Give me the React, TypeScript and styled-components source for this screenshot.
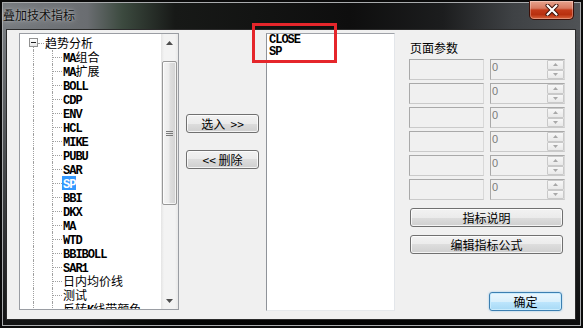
import React from 'react';
import styled, { createGlobalStyle, css } from 'styled-components';

const CJK = `"Noto Sans CJK SC", "Noto Sans", sans-serif`;
const MONO = `"Liberation Mono", "Noto Sans CJK SC", monospace`;

const GlobalStyle = createGlobalStyle`
    html, body {
        margin: 0;
        padding: 0;
        background: #000;
    }
    body {
        font-family: ${CJK};
        font-size: 12px;
    }
    * {
        box-sizing: border-box;
    }
`;

const Window = styled.div`
    position: relative;
    width: 583px;
    height: 328px;
    display: flex;
    flex-direction: column;
    overflow: hidden;
    background:
        linear-gradient(180deg, rgba(0, 0, 0, 0) 0, rgba(0, 0, 0, 0) 30px, rgba(0, 0, 0, 0.45) 55%, rgba(0, 0, 0, 0.85) 100%),
        linear-gradient(90deg, #787c80 0%, #6a6d71 15%, #3c4a3f 21%, #171917 30%, #0e0e0e 60%, #1c1d1e 76%, #3f4245 88%, #505356 100%);
    box-shadow: inset 0 0 0 2px #0b0b0b, inset 0 0 0 3px #a9abad;
`;

const TitleBar = styled.div`
    height: 30px;
    flex: none;
    display: flex;
    align-items: flex-start;
    padding: 0 9px 0 3px;
`;

const Title = styled.div`
    margin-top: 7px;
    font: 12px/16px ${CJK};
    color: #101010;
    text-shadow: 0 0 6px rgba(255, 255, 255, 0.55), 0 0 2px rgba(255, 255, 255, 0.45);
`;

const CloseButton = styled.div`
    margin-left: auto;
    margin-top: 1px;
    width: 45px;
    height: 19px;
    border: 1px solid #3b0f07;
    border-top: none;
    border-radius: 0 0 5px 5px;
    background: linear-gradient(#e8a48e, #d77a61 40%, #c33b1a 50%, #b8300f 75%, #d8643d 100%);
    box-shadow: inset 0 0 0 1px rgba(255, 255, 255, 0.3);
    display: flex;
    align-items: center;
    justify-content: center;
`;

const Client = styled.div`
    flex: 1;
    margin: 0 8px 9px 7px;
    background: #f0f0f0;
    box-shadow: 0 0 0 1px #2b2b2b;
    display: flex;
    align-items: flex-start;
    padding: 3px 10px 8px 12px;
`;

/* tree */

const Tree = styled.div`
    width: 160px;
    height: 277px;
    flex: none;
    background: #fff;
    border: 1px solid #9a9da3;
    display: flex;
    overflow: hidden;
`;

const TreeBody = styled.div`
    flex: 1;
    padding-top: 2px;
    overflow: hidden;
`;

const Row = styled.div`
    height: 14px;
    display: flex;
    align-items: stretch;
    white-space: nowrap;
`;

const Indent = styled.div<{ $w: number; $line?: boolean }>`
    width: ${(p) => p.$w}px;
    flex: none;
    display: flex;
    align-items: center;
    ${(p) =>
        p.$line &&
        css`
            border-left: 1px dotted #a0a0a0;
        `}
`;

const Dash = styled.div`
    flex: 1;
    border-top: 1px dotted #a0a0a0;
`;

const ExpanderCell = styled.div`
    width: 9px;
    flex: none;
    display: flex;
    flex-direction: column;
    align-items: center;
    padding-top: 2px;
`;

const ExpanderBox = styled.div`
    width: 9px;
    height: 9px;
    flex: none;
    border: 1px solid #919191;
    background: linear-gradient(#ffffff, #e6e6e6);
    display: flex;
    align-items: center;
    justify-content: center;

    &::before {
        content: '';
        width: 5px;
        height: 1px;
        background: #202020;
    }
`;

const Tail = styled.div`
    flex: 1;
    width: 1px;
    border-left: 1px dotted #a0a0a0;
`;

const Label = styled.span<{ $selected?: boolean }>`
    line-height: 14px;
    padding: 0 1px;
    color: ${(p) => (p.$selected ? '#fff' : '#000')};
    background: ${(p) => (p.$selected ? '#3399ff' : 'transparent')};
`;

const Latin = styled.span`
    font: bold 12px/14px ${MONO};
    letter-spacing: -1px;
`;

const Han = styled.span`
    font: 12px/14px ${CJK};
`;

const Scrollbar = styled.div`
    width: 17px;
    flex: none;
    display: flex;
    flex-direction: column;
    background: linear-gradient(90deg, #e4e4e4, #f3f3f3 18%, #f3f3f3 82%, #e8e8e8);
`;

const ScrollArrow = styled.div`
    height: 17px;
    flex: none;
    display: flex;
    align-items: center;
    justify-content: center;
`;

const Track = styled.div`
    flex: 1;
    display: flex;
    flex-direction: column;
    align-items: center;
`;

const Thumb = styled.div`
    margin-top: 10px;
    width: 15px;
    height: 144px;
    border: 1px solid #979797;
    border-radius: 2px;
    background: linear-gradient(90deg, #f4f4f4, #ececec 45%, #dedede 55%, #d3d3d3);
    box-shadow: inset 0 0 0 1px rgba(255, 255, 255, 0.7);
    display: flex;
    align-items: center;
    justify-content: center;
`;

/* middle */

const MoveColumn = styled.div`
    width: 73px;
    flex: none;
    margin: 0 7px;
    padding-top: 81px;
    display: flex;
    flex-direction: column;
    gap: 17px;
`;

const Button = styled.button<{ $primary?: boolean; $w?: number }>`
    height: 19px;
    width: ${(p) => (p.$w ? `${p.$w}px` : '100%')};
    flex: none;
    padding: 0;
    border: 1px solid #707070;
    border-radius: 3px;
    background: linear-gradient(#f2f2f2 0%, #ebebeb 50%, #dddddd 50%, #cfcfcf 100%);
    box-shadow: inset 0 0 0 1px rgba(255, 255, 255, 0.75);
    font: 12px/17px ${CJK};
    color: #000;
    white-space: pre;
    ${(p) =>
        p.$primary &&
        css`
            border-color: #3c7fb1;
            background: linear-gradient(#eaf6fd 0%, #d9f0fc 50%, #bee6fd 50%, #a7d9f5 100%);
            box-shadow: inset 0 0 0 1px #c8ebfd, 0 0 2px rgba(60, 160, 230, 0.6);
        `}
`;

const ListBox = styled.div`
    width: 129px;
    height: 278px;
    flex: none;
    background: #fff;
    border: 1px solid;
    border-color: #9fa2a8 #e3e6ea #e6e9ec #8f9399;
    padding: 0 2px;
    font: bold 12px/12px ${MONO};
    letter-spacing: -1px;
    color: #000;
`;

/* right panel */

const Panel = styled.div`
    width: 156px;
    height: 278px;
    flex: none;
    margin-left: 14px;
    display: flex;
    flex-direction: column;
`;

const PanelLabel = styled.div`
    margin: 8px 0 4px 1px;
    font: 12px/14px ${CJK};
    color: #000;
`;

const ParamRow = styled.div`
    height: 21px;
    display: flex;
    gap: 6px;

    & + & {
        margin-top: 3px;
    }
`;

const Field = styled.div`
    width: 75px;
    height: 21px;
    border: 1px solid;
    border-color: #a9a9a9 #d8d8d8 #cacaca #a9a9a9;
    background: #f0f0f0;
    display: flex;
`;

const FieldValue = styled.div`
    flex: 1;
    padding: 1px 0 0 1px;
    font: 11px/12px "Liberation Sans", sans-serif;
    color: #7b7b7b;
`;

const Spin = styled.div`
    width: 17px;
    margin: 0 0 0 auto;
    display: flex;
    flex-direction: column;
`;

const SpinHalf = styled.div`
    flex: 1;
    border: 1px solid #c9c9c9;
    border-radius: 1px;
    background: linear-gradient(#f7f7f7, #e9e9e9);
    display: flex;
    align-items: center;
    justify-content: center;
`;

const Tall = styled.div`
    margin-top: 8px;
    margin-left: 1px;
`;

const Footer = styled.div`
    margin-top: auto;
    display: flex;
    justify-content: flex-end;
    padding-right: 3px;
`;

const Annotation = styled.div`
    position: absolute;
    left: 252px;
    top: 23px;
    width: 85px;
    height: 40px;
    border: 3px solid #e5262b;
    pointer-events: none;
`;

const Arrow: React.FC<{ up?: boolean; color?: string; w?: number }> = ({ up, color = '#5a5a5a', w = 7 }) => (
    <svg width={w} height={Math.ceil(w / 2)} viewBox={`0 0 ${w} ${Math.ceil(w / 2)}`}>
        {up ? (
            <polygon points={`0,${Math.ceil(w / 2)} ${w},${Math.ceil(w / 2)} ${w / 2},0`} fill={color} />
        ) : (
            <polygon points={`0,0 ${w},0 ${w / 2},${Math.ceil(w / 2)}`} fill={color} />
        )}
    </svg>
);

const indicators = [
    'MA组合',
    'MA扩展',
    'BOLL',
    'CDP',
    'ENV',
    'HCL',
    'MIKE',
    'PUBU',
    'SAR',
    'SP',
    'BBI',
    'DKX',
    'MA',
    'WTD',
    'BBIBOLL',
    'SAR1',
    '日内均价线',
    '测试',
    '反转K线带颜色',
];

const renderText = (s: string) =>
    (s.match(/[\x00-\x7f]+|[^\x00-\x7f]+/g) || []).map((part, i) =>
        /^[\x00-\x7f]/.test(part) ? <Latin key={i}>{part}</Latin> : <Han key={i}>{part}</Han>
    );

export default function App() {
    return (
        <Window>
            <GlobalStyle />
            <TitleBar>
                <Title>叠加技术指标</Title>
                <CloseButton>
                    <svg width="14" height="12" viewBox="0 0 14 12">
                        <path d="M2.5 1.5 L11.5 10.5 M11.5 1.5 L2.5 10.5" stroke="#3a1008" strokeWidth="4" strokeLinecap="round" />
                        <path d="M2.5 1.5 L11.5 10.5 M11.5 1.5 L2.5 10.5" stroke="#ffffff" strokeWidth="2.2" strokeLinecap="round" />
                    </svg>
                </CloseButton>
            </TitleBar>
            <Client>
                <Tree>
                    <TreeBody>
                        <Row>
                            <Indent $w={9} />
                            <ExpanderCell>
                                <ExpanderBox />
                                <Tail />
                            </ExpanderCell>
                            <Indent $w={6}>
                                <Dash />
                            </Indent>
                            <Label>
                                <Han>趋势分析</Han>
                            </Label>
                        </Row>
                        {indicators.map((name) => (
                            <Row key={name}>
                                <Indent $w={13} />
                                <Indent $w={19} $line />
                                <Indent $w={10} $line>
                                    <Dash />
                                </Indent>
                                <Label $selected={name === 'SP'}>{renderText(name)}</Label>
                            </Row>
                        ))}
                    </TreeBody>
                    <Scrollbar>
                        <ScrollArrow>
                            <Arrow up w={7} color="#4e4e4e" />
                        </ScrollArrow>
                        <Track>
                            <Thumb>
                                <svg width="7" height="5" viewBox="0 0 7 5">
                                    <path d="M0 0.5 H7 M0 2.5 H7 M0 4.5 H7" stroke="#7a7a7a" strokeWidth="1" />
                                </svg>
                            </Thumb>
                        </Track>
                        <ScrollArrow>
                            <Arrow w={7} color="#4e4e4e" />
                        </ScrollArrow>
                    </Scrollbar>
                </Tree>

                <MoveColumn>
                    <Button>{'选入  >>'}</Button>
                    <Button>{'<< 删除'}</Button>
                </MoveColumn>

                <ListBox>
                    <div>CLOSE</div>
                    <div>SP</div>
                </ListBox>

                <Panel>
                    <PanelLabel>页面参数</PanelLabel>
                    {[0, 1, 2, 3, 4, 5].map((i) => (
                        <ParamRow key={i}>
                            <Field />
                            <Field>
                                <FieldValue>0</FieldValue>
                                <Spin>
                                    <SpinHalf>
                                        <Arrow up w={5} color="#a8a8a8" />
                                    </SpinHalf>
                                    <SpinHalf>
                                        <Arrow w={5} color="#a8a8a8" />
                                    </SpinHalf>
                                </Spin>
                            </Field>
                        </ParamRow>
                    ))}
                    <Tall>
                        <Button $w={153}>指标说明</Button>
                    </Tall>
                    <Tall>
                        <Button $w={153}>编辑指标公式</Button>
                    </Tall>
                    <Footer>
                        <Button $primary $w={73}>
                            确定
                        </Button>
                    </Footer>
                </Panel>
            </Client>
            <Annotation />
        </Window>
    );
}
